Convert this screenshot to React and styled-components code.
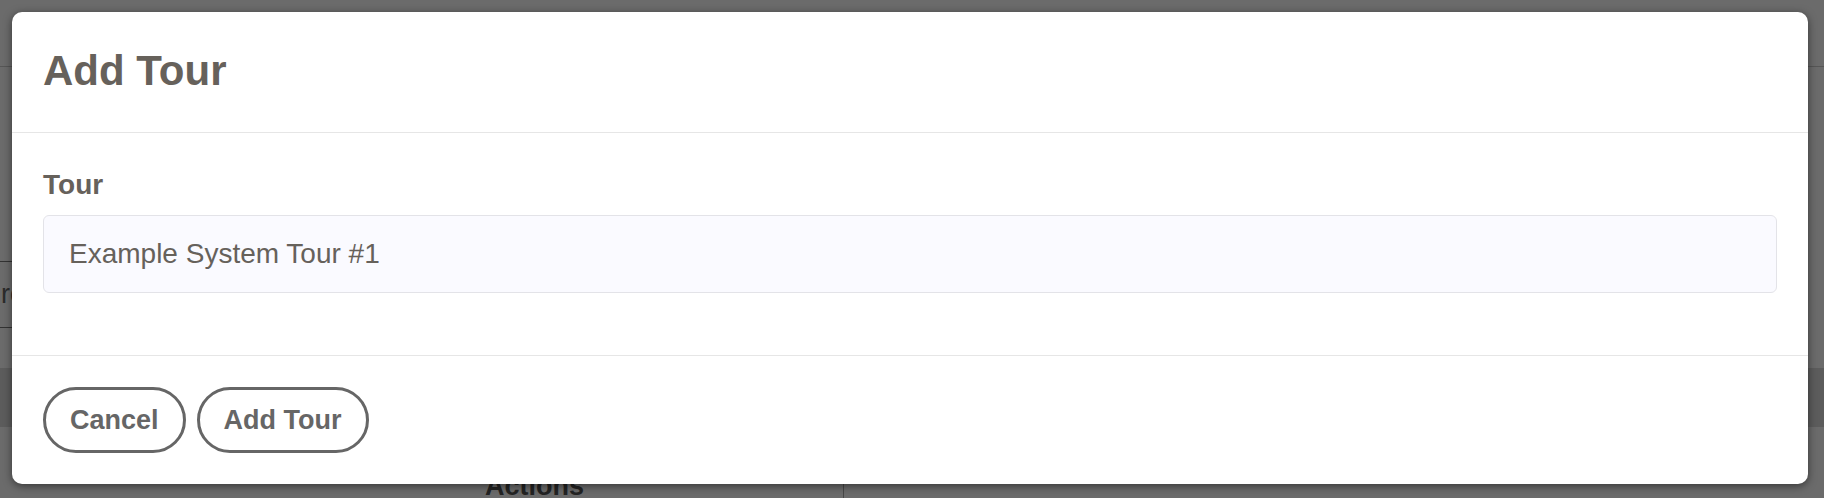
import React from 'react';
import styled, { createGlobalStyle } from 'styled-components';

const GlobalStyle = createGlobalStyle`
  html, body {
    margin: 0;
    padding: 0;
    background: #fff;
  }
  * {
    box-sizing: border-box;
  }
`;

const Page = styled.div`
  position: relative;
  width: 1824px;
  height: 498px;
  overflow: hidden;
  background: #fff;
  font-family: "Liberation Sans", Arial, sans-serif;
  color: #666;
`;

const TopBar = styled.header`
  height: 67px;
  border-bottom: 1px solid #ccc;
`;

const FilterBox = styled.div`
  margin-top: 194px;
  width: 320px;
  height: 67px;
  border-top: 1px solid #7a7a7a;
  border-bottom: 1px solid #7a7a7a;
  display: flex;
  align-items: center;
  padding-left: 1px;
  font-size: 27px;
  color: #666;
`;

const Band = styled.div`
  margin-top: 40px;
  height: 59px;
  background: #dcdcdc;
`;

const TableHead = styled.div`
  margin-top: 23px;
  display: grid;
  grid-template-columns: 455px 388px 1fr;
  height: 60px;
`;

const HeadCell = styled.div`
  padding: 20px 30px 0;
  font-size: 27px;
  line-height: 32px;
  font-weight: 700;
  color: #555;
  border-left: ${({ $divided }) => ($divided ? '1px solid #aaa' : 'none')};
`;

const Overlay = styled.div`
  position: absolute;
  inset: 0;
  background: rgba(0, 0, 0, 0.58);
`;

const Modal = styled.div`
  position: absolute;
  top: 12px;
  left: 12px;
  right: 16px;
  background: #fff;
  border-radius: 10px;
  box-shadow: 0 2px 8px rgba(0, 0, 0, 0.5);
  overflow: hidden;
`;

const ModalHeader = styled.div`
  padding: 35px 31px 37px;
  border-bottom: 1px solid #e6e6e6;
`;

const Title = styled.h2`
  margin: 0;
  font-size: 42px;
  line-height: 48px;
  font-weight: 700;
  color: #66615b;
`;

const ModalBody = styled.div`
  padding: 36px 31px 62px;
  border-bottom: 1px solid #e6e6e6;
`;

const Label = styled.label`
  display: block;
  margin-bottom: 14px;
  font-size: 28px;
  line-height: 32px;
  font-weight: 700;
  color: #66615b;
`;

const Input = styled.input`
  display: block;
  width: 100%;
  height: 78px;
  padding: 0 25px;
  border: 1px solid #e3e3e8;
  border-radius: 6px;
  background: #fafaff;
  font-family: "Liberation Sans", Arial, sans-serif;
  font-size: 28px;
  color: #66615b;
  outline: none;
`;

const ModalFooter = styled.div`
  display: flex;
  gap: 11px;
  padding: 31px;
`;

const PillButton = styled.button`
  height: 66px;
  padding: 0 24px;
  border: 3px solid #666;
  border-radius: 33px;
  background: #fff;
  font-family: "Liberation Sans", Arial, sans-serif;
  font-size: 27px;
  font-weight: 700;
  color: #666;
  cursor: pointer;
`;

export default function App() {
  return (
    <>
      <GlobalStyle />
      <Page>
        <TopBar />
        <FilterBox>rows</FilterBox>
        <Band />
        <TableHead>
          <HeadCell />
          <HeadCell>Actions</HeadCell>
          <HeadCell $divided />
        </TableHead>

        <Overlay />
        <Modal>
          <ModalHeader>
            <Title>Add Tour</Title>
          </ModalHeader>
          <ModalBody>
            <Label htmlFor="tour">Tour</Label>
            <Input id="tour" defaultValue="Example System Tour #1" />
          </ModalBody>
          <ModalFooter>
            <PillButton>Cancel</PillButton>
            <PillButton>Add Tour</PillButton>
          </ModalFooter>
        </Modal>
      </Page>
    </>
  );
}
